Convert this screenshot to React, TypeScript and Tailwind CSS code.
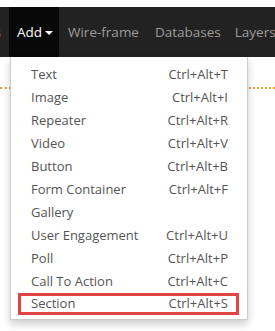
const items: [string, string][] = [
  ["Text", "Ctrl+Alt+T"],
  ["Image", "Ctrl+Alt+I"],
  ["Repeater", "Ctrl+Alt+R"],
  ["Video", "Ctrl+Alt+V"],
  ["Button", "Ctrl+Alt+B"],
  ["Form Container", "Ctrl+Alt+F"],
  ["Gallery", ""],
  ["User Engagement", "Ctrl+Alt+U"],
  ["Poll", "Ctrl+Alt+P"],
  ["Call To Action", "Ctrl+Alt+C"],
  ["Section", "Ctrl+Alt+S"],
];

export default function App() {
  return (
    <div className="w-[275px] h-[331px] overflow-hidden bg-white font-['Open_Sans',sans-serif] flex flex-col">
      <div className="h-[7px] bg-white" />
      <div className="h-[50px] bg-[#222222] flex items-stretch text-[13.5px] whitespace-nowrap">
        <span className="flex items-center justify-end text-[#d9822b] w-[9px] shrink-0 overflow-hidden">
          <span className="mr-[8px]">s</span>
        </span>
        <div className="bg-[#080808] w-[50px] shrink-0 flex items-center pl-[8px] text-white">
          Add
          <span className="ml-[3px] mt-[2px] border-x-[4px] border-x-transparent border-t-[4px] border-t-white" />
        </div>
        <span className="flex items-center ml-[9px] text-[#9d9d9d]">Wire-frame</span>
        <span className="flex items-center ml-[16px] text-[#9d9d9d]">Databases</span>
        <span className="flex items-center ml-[14px] text-[#9d9d9d]">Layers</span>
      </div>
      <div className="relative flex-1">
        <div className="mt-[30px] border-t-[2px] border-dotted border-[#e8a030]" />
        <div className="absolute left-[10px] top-0 w-[238px] bg-white border border-t-0 border-[#cccccc] shadow-[0_4px_8px_rgba(0,0,0,0.2)] pt-[6px] pb-[4px] text-[13px] text-[#555555]">
          {items.map(([label, key]) => (
            <div
              key={label}
              className={
                label === "Section"
                  ? "ml-[7px] mr-[8px] h-[22px] flex items-center justify-between pl-[10px] pr-[8px] border-[3px] border-[#e04444]"
                  : "ml-[7px] mr-[8px] h-[23px] flex items-center justify-between pl-[13px] pr-[11px]"
              }
            >
              <span>{label}</span>
              <span>{key}</span>
            </div>
          ))}
        </div>
      </div>
    </div>
  );
}
